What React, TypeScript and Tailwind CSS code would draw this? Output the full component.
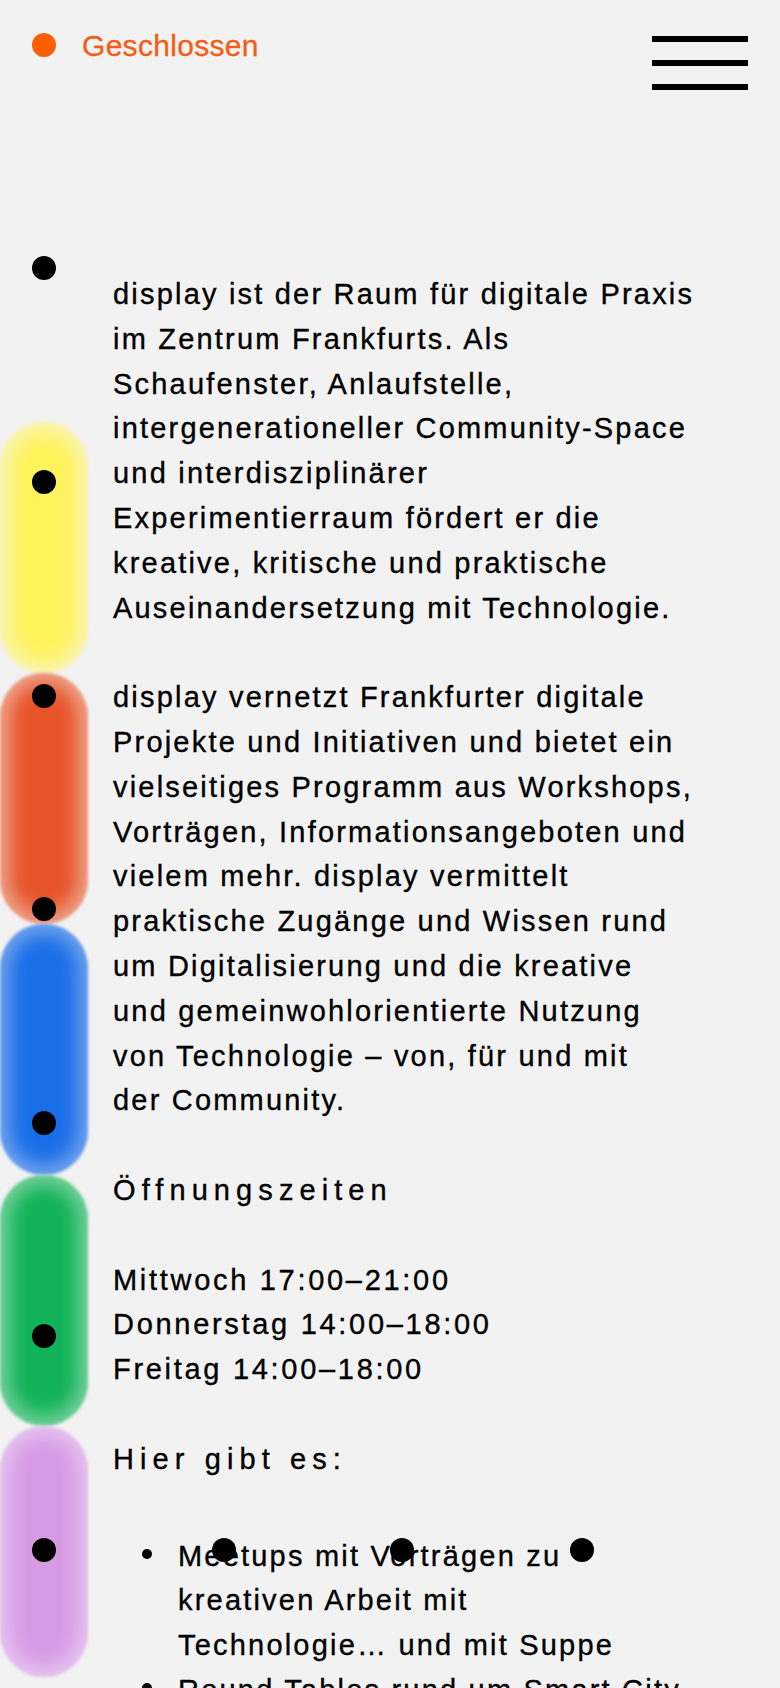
import React from 'react';

const intro = [
  'display ist der Raum für digitale Praxis',
  'im Zentrum Frankfurts. Als',
  'Schaufenster, Anlaufstelle,',
  'intergenerationeller Community-Space',
  'und interdisziplinärer',
  'Experimentierraum fördert er die',
  'kreative, kritische und praktische',
  'Auseinandersetzung mit Technologie.',
];

const network = [
  'display vernetzt Frankfurter digitale',
  'Projekte und Initiativen und bietet ein',
  'vielseitiges Programm aus Workshops,',
  'Vorträgen, Informationsangeboten und',
  'vielem mehr. display vermittelt',
  'praktische Zugänge und Wissen rund',
  'um Digitalisierung und die kreative',
  'und gemeinwohlorientierte Nutzung',
  'von Technologie – von, für und mit',
  'der Community.',
];

const hours = ['Mittwoch 17:00–21:00', 'Donnerstag 14:00–18:00', 'Freitag 14:00–18:00'];

const offers = [
  ['Meetups mit Vorträgen zu', 'kreativen Arbeit mit', 'Technologie… und mit Suppe'],
  ['Round Tables rund um Smart City'],
];

// soft glowing capsules down the left edge
const pills = [
  'bg-[#fff35c] shadow-[inset_0_0_18px_10px_rgba(248,244,196,0.85)]',
  'bg-[#e8542a] shadow-[inset_0_0_18px_10px_rgba(240,196,180,0.7)]',
  'bg-[#1a6fe8] shadow-[inset_0_0_18px_10px_rgba(170,196,240,0.6)]',
  'bg-[#12b35a] shadow-[inset_0_0_18px_10px_rgba(170,224,190,0.65)]',
  'bg-[#d79be6] shadow-[inset_0_0_18px_10px_rgba(236,212,242,0.7)]',
];

const dots = [
  'left-[32px] top-[256px]',
  'left-[32px] top-[470px]',
  'left-[32px] top-[684px]',
  'left-[32px] top-[897px]',
  'left-[32px] top-[1111px]',
  'left-[32px] top-[1324px]',
  'left-[32px] top-[1538px]',
  'left-[212px] top-[1538px]',
  'left-[390px] top-[1538px]',
  'left-[570px] top-[1538px]',
];

const Lines: React.FC<{ lines: string[] }> = ({ lines }) => (
  <>
    {lines.map((line, i) => (
      <React.Fragment key={i}>
        {line}
        {i < lines.length - 1 && <br />}
      </React.Fragment>
    ))}
  </>
);

const App: React.FC = () => {
  return (
    <div className="relative min-h-screen overflow-hidden bg-[#f2f2f2] font-['Liberation_Sans',Arial,sans-serif] text-black">
      <header className="flex items-start justify-between px-8 pt-8">
        <div className="flex items-center gap-[26px]">
          <span className="h-6 w-6 rounded-full bg-[#ff5f00]" />
          <span className="mt-[2px] text-[30px] leading-6 tracking-[0.3px] text-[#f25c14] [-webkit-text-stroke:0.3px_#f25c14]">
            Geschlossen
          </span>
        </div>
        <button className="mt-1 flex w-24 flex-col gap-[18px]" aria-label="Menü">
          <span className="h-[6px] w-full bg-black" />
          <span className="h-[6px] w-full bg-black" />
          <span className="h-[6px] w-full bg-black" />
        </button>
      </header>

      <div className="flex">
        <aside className="flex w-[88px] shrink-0 flex-col pt-[332px]">
          {pills.map((c, i) => (
            <div key={i} className={`h-[251px] w-full rounded-full blur-[1.5px] ${c}`} />
          ))}
        </aside>

        <main className="ml-[25px] w-[640px] pt-[182px] text-[29px] leading-[44.8px] tracking-[2.2px] [-webkit-text-stroke:0.35px_black]">
          <p className="mb-[44.8px]">
            <Lines lines={intro} />
          </p>
          <p className="mb-[44.8px]">
            <Lines lines={network} />
          </p>
          <h2 className="mb-[44.8px] tracking-[0.21em]">Öffnungszeiten</h2>
          <p className="mb-[44.8px] tracking-[2.7px]">
            <Lines lines={hours} />
          </p>
          <h2 className="tracking-[0.21em]">Hier gibt es:</h2>
          <ul className="mt-[52px]">
            {offers.map((item, i) => (
              <li key={i} className="flex">
                <span className="w-[65px] shrink-0 pl-[29px]">
                  <span className="mt-[15px] block h-[10px] w-[10px] rounded-full bg-black" />
                </span>
                <span>
                  <Lines lines={item} />
                </span>
              </li>
            ))}
          </ul>
        </main>
      </div>

      {dots.map((pos, i) => (
        <span key={i} className={`absolute z-10 h-6 w-6 rounded-full bg-black ${pos}`} />
      ))}
    </div>
  );
};

export default App;
